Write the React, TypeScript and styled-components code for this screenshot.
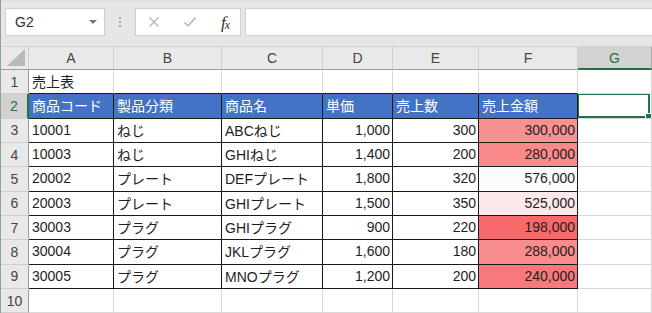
import React from "react";
import styled, { createGlobalStyle } from "styled-components";

const GlobalStyle = createGlobalStyle`
  html, body { margin: 0; padding: 0; background: #ffffff; }
  body { font-family: "Liberation Sans", "Noto Sans CJK JP", sans-serif; }
`;

const Window = styled.div`
  width: 652px;
  height: 313px;
  overflow: hidden;
  box-sizing: border-box;
  border-left: 1px solid #8ea596;
  display: flex;
  flex-direction: column;
  background: #fff;
`;

const Toolbar = styled.div`
  height: 47px;
  box-sizing: border-box;
  background: #e6e6e6;
  border-top: 2px solid #dedede;
  border-bottom: 1px solid #d2d2d2;
  padding: 6px 0 0 4px;
  display: flex;
  align-items: flex-start;
  flex-shrink: 0;
`;

const NameBox = styled.div`
  width: 100px;
  height: 28px;
  box-sizing: border-box;
  background: #fff;
  border: 1px solid #d0d0d0;
  display: flex;
  align-items: center;
  justify-content: space-between;
  padding: 0 7px 0 9px;
  font-size: 14px;
  color: #333;
`;

const DropArrow = styled.span`
  width: 0;
  height: 0;
  border-left: 4px solid transparent;
  border-right: 4px solid transparent;
  border-top: 4px solid #777;
`;

const Grip = styled.div`
  width: 30px;
  height: 28px;
  display: flex;
  flex-direction: column;
  align-items: center;
  justify-content: center;
  gap: 2px;
`;

const GripDot = styled.span`
  width: 2px;
  height: 2px;
  background: #a8a8a8;
`;

const FormulaButtons = styled.div`
  width: 106px;
  height: 28px;
  box-sizing: border-box;
  background: #fff;
  border: 1px solid #d0d0d0;
  display: grid;
  grid-template-columns: 36px 36px 34px;
  align-items: center;
  justify-items: center;
`;

const Fx = styled.span`
  font-family: "Liberation Serif", serif;
  font-style: italic;
  font-size: 17px;
  color: #333;
  letter-spacing: -1px;
  line-height: 1;
  & > small {
    font-size: 12px;
    vertical-align: -1px;
  }
`;

const FormulaInput = styled.div`
  flex: 1;
  height: 28px;
  margin-left: 4px;
  box-sizing: border-box;
  background: #fff;
  border: 1px solid #d0d0d0;
  border-right: none;
`;

const Sheet = styled.div`
  display: grid;
  grid-template-columns: 28px 85px 108px 101px 70px 86px 99px 74px;
  grid-template-rows: 23px repeat(10, 24.33px);
  font-size: 14px;
`;

const Corner = styled.div`
  background: #e9e9e9;
  box-sizing: border-box;
  border-right: 1px solid #cfcfcf;
  border-bottom: 1px solid #9d9d9d;
  display: flex;
  align-items: flex-end;
  justify-content: flex-end;
  padding: 0 3px 3px 0;
`;

const ColHeader = styled.div<{ $selected?: boolean }>`
  box-sizing: border-box;
  background: ${(p) => (p.$selected ? "#d2d2d2" : "#e9e9e9")};
  border-right: 1px solid ${(p) => (p.$selected ? "#ababab" : "#cfcfcf")};
  border-bottom: ${(p) => (p.$selected ? "2px solid #217346" : "1px solid #9d9d9d")};
  color: ${(p) => (p.$selected ? "#217346" : "#444")};
  display: flex;
  align-items: center;
  justify-content: center;
  font-size: 14px;
  padding-top: ${(p) => (p.$selected ? "1px" : "0")};
`;

const RowHeader = styled.div<{ $selected?: boolean }>`
  box-sizing: border-box;
  background: ${(p) => (p.$selected ? "#d2d2d2" : "#e9e9e9")};
  border-right: ${(p) => (p.$selected ? "2px solid #217346" : "1px solid #9d9d9d")};
  border-bottom: 1px solid #cfcfcf;
  color: ${(p) => (p.$selected ? "#217346" : "#444")};
  display: flex;
  align-items: center;
  justify-content: center;
  font-size: 14px;
`;

const Cell = styled.div<{
  $align?: "left" | "right";
  $head?: boolean;
  $bg?: string;
  $rightDark?: boolean;
  $bottomDark?: boolean;
}>`
  position: relative;
  box-sizing: border-box;
  background: ${(p) => (p.$head ? "#4472c4" : p.$bg || "#fff")};
  color: ${(p) => (p.$head ? "#ffffff" : "#1e1e1e")};
  border-right: 1px solid ${(p) => (p.$rightDark ? "#1a1a1a" : "#d9d9d9")};
  border-bottom: 1px solid ${(p) => (p.$bottomDark ? "#1a1a1a" : "#d9d9d9")};
  display: flex;
  align-items: center;
  justify-content: ${(p) => (p.$align === "right" ? "flex-end" : "flex-start")};
  padding: 0 2px 1px 3px;
  white-space: nowrap;
  overflow: hidden;
`;

const Selection = styled.div`
  position: absolute;
  left: -1px;
  top: -1px;
  right: 1px;
  bottom: 0;
  border: 2px solid #217346;
  pointer-events: none;
`;

const Handle = styled.span`
  position: absolute;
  right: -4px;
  bottom: -4px;
  width: 5px;
  height: 5px;
  background: #217346;
  border: 1px solid #fff;
`;

const columns = ["A", "B", "C", "D", "E", "F", "G"];

const rows: string[][] = [
  ["売上表", "", "", "", "", ""],
  ["商品コード", "製品分類", "商品名", "単価", "売上数", "売上金額"],
  ["10001", "ねじ", "ABCねじ", "1,000", "300", "300,000"],
  ["10003", "ねじ", "GHIねじ", "1,400", "200", "280,000"],
  ["20002", "プレート", "DEFプレート", "1,800", "320", "576,000"],
  ["20003", "プレート", "GHIプレート", "1,500", "350", "525,000"],
  ["30003", "プラグ", "GHIプラグ", "900", "220", "198,000"],
  ["30004", "プラグ", "JKLプラグ", "1,600", "180", "288,000"],
  ["30005", "プラグ", "MNOプラグ", "1,200", "200", "240,000"],
  ["", "", "", "", "", ""],
];

const sales = rows.slice(2, 9).map((r) => Number(r[5].replace(/,/g, "")));
const minV = Math.min(...sales);
const maxV = Math.max(...sales);

function scaleColor(v: number): string {
  const t = (v - minV) / (maxV - minV);
  const lo = [248, 105, 107];
  const hi = [252, 252, 255];
  const c = lo.map((l, i) => Math.round(l + (hi[i] - l) * t));
  return `rgb(${c[0]}, ${c[1]}, ${c[2]})`;
}

const Cross = () => (
  <svg width="12" height="12" viewBox="0 0 12 12">
    <path d="M1.5 1.5 L10.5 10.5 M10.5 1.5 L1.5 10.5" stroke="#b4b4b4" strokeWidth="1.3" fill="none" />
  </svg>
);

const Check = () => (
  <svg width="14" height="12" viewBox="0 0 14 12">
    <path d="M1.5 6.5 L5 10 L12.5 1.5" stroke="#b4b4b4" strokeWidth="1.5" fill="none" />
  </svg>
);

const CornerTriangle = () => (
  <svg width="18" height="17" viewBox="0 0 18 17">
    <polygon points="18,0 18,17 0,17" fill="#b9b9b9" />
  </svg>
);

export default function App() {
  return (
    <>
      <GlobalStyle />
      <Window>
        <Toolbar>
          <NameBox>
            <span>G2</span>
            <DropArrow />
          </NameBox>
          <Grip>
            <GripDot />
            <GripDot />
            <GripDot />
          </Grip>
          <FormulaButtons>
            <Cross />
            <Check />
            <Fx>
              f<small>x</small>
            </Fx>
          </FormulaButtons>
          <FormulaInput />
        </Toolbar>
        <Sheet>
          <Corner>
            <CornerTriangle />
          </Corner>
          {columns.map((c) => (
            <ColHeader key={c} $selected={c === "G"}>
              {c}
            </ColHeader>
          ))}
          {rows.map((r, ri) => {
            const rowNum = ri + 1;
            return (
              <React.Fragment key={rowNum}>
                <RowHeader $selected={rowNum === 2}>{rowNum}</RowHeader>
                {columns.map((c, ci) => {
                  const inTable = ci <= 5 && rowNum >= 2 && rowNum <= 9;
                  const value = ci <= 5 ? r[ci] || "" : "";
                  const numeric = rowNum >= 3 && rowNum <= 9 && ci >= 3 && ci <= 5;
                  const bg =
                    ci === 5 && rowNum >= 3 && rowNum <= 9
                      ? scaleColor(Number(value.replace(/,/g, "")))
                      : undefined;
                  return (
                    <Cell
                      key={c}
                      $head={rowNum === 2 && ci <= 5}
                      $align={numeric ? "right" : "left"}
                      $bg={bg}
                      $rightDark={inTable}
                      $bottomDark={ci <= 5 && rowNum >= 1 && rowNum <= 9}
                    >
                      {value}
                      {rowNum === 2 && c === "G" && (
                        <Selection>
                          <Handle />
                        </Selection>
                      )}
                    </Cell>
                  );
                })}
              </React.Fragment>
            );
          })}
        </Sheet>
      </Window>
    </>
  );
}
